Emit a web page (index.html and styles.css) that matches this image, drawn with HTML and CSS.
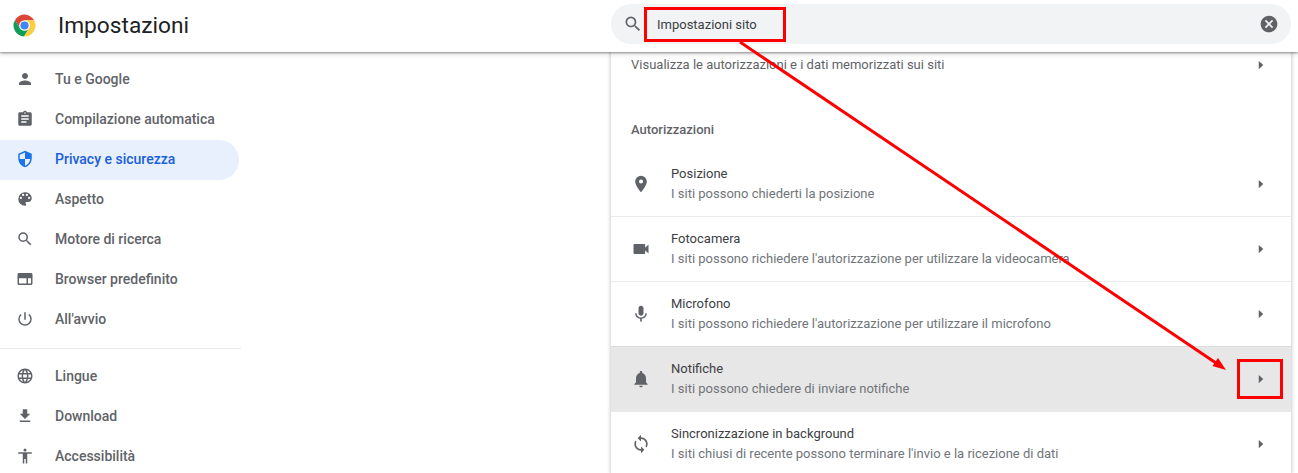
FILE: index.html
```html
<!DOCTYPE html>
<html lang="it">
<head>
  <meta charset="UTF-8" />
  <title>Impostazioni</title>
  <link rel="stylesheet" href="styles.css">
</head>
<body>
  <header class="topbar">
    <div class="brand">
      <svg class="logo" viewBox="0 0 24 24">
        <path d="M12 6.5H22A11.5 11.5 0 0 0 2.1 6.2L7.2 14.8z" fill="#db4437"/>
        <path d="M7.2 14.8 2.1 6.2A11.5 11.5 0 0 0 11.5 23.5L16.8 14.8z" fill="#0f9d58"/>
        <path d="M12 6.5H22A11.5 11.5 0 0 1 11.5 23.5L16.8 14.8z" fill="#ffcd40"/>
        <circle cx="12" cy="12" r="5.6" fill="#fff"/>
        <circle cx="12" cy="12" r="4.3" fill="#4285f4"/>
      </svg>
      <h1 class="title">Impostazioni</h1>
    </div>
    <div class="search">
      <svg class="search-icon" viewBox="0 0 24 24"><path d="M15.5 14h-.79l-.28-.27A6.47 6.47 0 0 0 16 9.5 6.5 6.5 0 1 0 9.5 16c1.61 0 3.09-.59 4.23-1.57l.27.28v.79l5 4.99L20.49 19l-4.99-5zm-6 0C7.01 14 5 11.99 5 9.5S7.01 5 9.5 5 14 7.01 14 9.5 11.99 14 9.5 14z"/></svg>
      <span class="search-text">Impostazioni sito</span>
      <svg class="clear-icon" viewBox="0 0 24 24"><path d="M12 2C6.47 2 2 6.47 2 12s4.47 10 10 10 10-4.47 10-10S17.53 2 12 2zm5 13.59L15.59 17 12 13.41 8.41 17 7 15.59 10.59 12 7 8.41 8.41 7 12 10.59 15.59 7 17 8.41 13.41 12 17 15.59z"/></svg>
    </div>
  </header>

  <div class="main">
    <nav class="sidebar">
      <a class="nav-item"><svg viewBox="0 0 24 24"><path d="M12 12c2.21 0 4-1.79 4-4s-1.79-4-4-4-4 1.79-4 4 1.79 4 4 4zm0 2c-2.67 0-8 1.34-8 4v2h16v-2c0-2.66-5.33-4-8-4z"/></svg>Tu e Google</a>
      <a class="nav-item"><svg viewBox="0 0 24 24"><path d="M19 3h-4.18C14.4 1.84 13.3 1 12 1s-2.4.84-2.82 2H5c-1.1 0-2 .9-2 2v14c0 1.1.9 2 2 2h14c1.1 0 2-.9 2-2V5c0-1.1-.9-2-2-2zm-7 0c.55 0 1 .45 1 1s-.45 1-1 1-1-.45-1-1 .45-1 1-1zm2 14H7v-2h7v2zm3-4H7v-2h10v2zm0-4H7V7h10v2z"/></svg>Compilazione automatica</a>
      <a class="nav-item active"><svg viewBox="0 0 24 24"><path d="M12 1 3 5v6c0 5.55 3.84 10.74 9 12 5.16-1.26 9-6.45 9-12V5l-9-4zm0 10.99h7c-.53 4.12-3.28 7.79-7 8.94V12H5V6.3l7-3.11v8.8z"/></svg>Privacy e sicurezza</a>
      <a class="nav-item"><svg viewBox="0 0 24 24"><path d="M12 3a9 9 0 0 0 0 18c.83 0 1.5-.67 1.5-1.5 0-.39-.15-.74-.39-1.01-.23-.26-.38-.61-.38-.99 0-.83.67-1.5 1.5-1.5H16c2.76 0 5-2.24 5-5 0-4.42-4.03-8-9-8zm-5.5 9a1.5 1.5 0 1 1 0-3 1.5 1.5 0 0 1 0 3zm3-4a1.5 1.5 0 1 1 0-3 1.5 1.5 0 0 1 0 3zm5 0a1.5 1.5 0 1 1 0-3 1.5 1.5 0 0 1 0 3zm3 4a1.5 1.5 0 1 1 0-3 1.5 1.5 0 0 1 0 3z"/></svg>Aspetto</a>
      <a class="nav-item"><svg viewBox="0 0 24 24"><path d="M15.5 14h-.79l-.28-.27A6.47 6.47 0 0 0 16 9.5 6.5 6.5 0 1 0 9.5 16c1.61 0 3.09-.59 4.23-1.57l.27.28v.79l5 4.99L20.49 19l-4.99-5zm-6 0C7.01 14 5 11.99 5 9.5S7.01 5 9.5 5 14 7.01 14 9.5 11.99 14 9.5 14z"/></svg>Motore di ricerca</a>
      <a class="nav-item"><svg viewBox="0 0 24 24"><path d="M20 4H4c-1.1 0-2 .9-2 2v12c0 1.1.9 2 2 2h16c1.1 0 2-.9 2-2V6c0-1.1-.9-2-2-2zM4 18v-7h10v7H4zm16 0h-4v-7h4v7z"/></svg>Browser predefinito</a>
      <a class="nav-item"><svg viewBox="0 0 24 24"><path d="M13 3h-2v10h2V3zm4.83 2.17-1.42 1.42A6.92 6.92 0 0 1 19 12a7 7 0 1 1-11.42-5.41L6.17 5.17A8.93 8.93 0 0 0 3 12a9 9 0 0 0 18 0c0-2.74-1.23-5.18-3.17-6.83z"/></svg>All'avvio</a>
      <div class="nav-sep"></div>
      <a class="nav-item"><svg viewBox="0 0 24 24"><path d="M11.99 2C6.47 2 2 6.48 2 12s4.47 10 9.99 10C17.52 22 22 17.52 22 12S17.52 2 11.99 2zm6.93 6h-2.95a15.65 15.65 0 0 0-1.38-3.56A8.03 8.03 0 0 1 18.92 8zM12 4.04c.83 1.2 1.48 2.53 1.91 3.96h-3.82c.43-1.43 1.08-2.76 1.91-3.96zM4.26 14C4.1 13.36 4 12.69 4 12s.1-1.36.26-2h3.38c-.08.66-.14 1.32-.14 2s.06 1.34.14 2H4.26zm.82 2h2.95c.32 1.25.78 2.45 1.38 3.56A7.987 7.987 0 0 1 5.08 16zm2.95-8H5.08a7.987 7.987 0 0 1 4.33-3.56A15.65 15.65 0 0 0 8.03 8zM12 19.96c-.83-1.2-1.48-2.53-1.91-3.96h3.82c-.43 1.43-1.08 2.76-1.91 3.96zM14.34 14H9.66c-.09-.66-.16-1.32-.16-2s.07-1.35.16-2h4.68c.09.65.16 1.32.16 2s-.07 1.34-.16 2zm.25 5.56c.6-1.11 1.06-2.31 1.38-3.56h2.95a8.03 8.03 0 0 1-4.33 3.56zM16.36 14c.08-.66.14-1.32.14-2s-.06-1.34-.14-2h3.38c.16.64.26 1.31.26 2s-.1 1.36-.26 2h-3.38z"/></svg>Lingue</a>
      <a class="nav-item"><svg viewBox="0 0 24 24"><path d="M19 9h-4V3H9v6H5l7 7 7-7zM5 18v2h14v-2H5z"/></svg>Download</a>
      <a class="nav-item"><svg viewBox="0 0 24 24"><path d="M12 2a2 2 0 1 1 0 4 2 2 0 0 1 0-4zm9 7h-6v13h-2v-6h-2v6H9V9H3V7h18v2z"/></svg>Accessibilità</a>
    </nav>

    <section class="card">
      <div class="top-row">
        <span>Visualizza le autorizzazioni e i dati memorizzati sui siti</span>
        <svg class="chevron" viewBox="0 0 24 24"><path d="M9 6.5 15 12l-6 5.5z"/></svg>
      </div>
      <h2 class="card-heading">Autorizzazioni</h2>

      <div class="perm">
        <svg class="perm-icon" viewBox="0 0 24 24"><path d="M12 2a7 7 0 0 0-7 7c0 5.25 7 13 7 13s7-7.75 7-13a7 7 0 0 0-7-7zm0 9.5a2.5 2.5 0 1 1 0-5 2.5 2.5 0 0 1 0 5z"/></svg>
        <div class="perm-text"><div class="perm-name">Posizione</div><div class="perm-desc">I siti possono chiederti la posizione</div></div>
        <svg class="chevron" viewBox="0 0 24 24"><path d="M9 6.5 15 12l-6 5.5z"/></svg>
      </div>
      <div class="perm">
        <svg class="perm-icon" viewBox="0 0 24 24"><path d="M17 10.5V7c0-.55-.45-1-1-1H4c-.55 0-1 .45-1 1v10c0 .55.45 1 1 1h12c.55 0 1-.45 1-1v-3.5l4 4v-11l-4 4z"/></svg>
        <div class="perm-text"><div class="perm-name">Fotocamera</div><div class="perm-desc">I siti possono richiedere l'autorizzazione per utilizzare la videocamera</div></div>
        <svg class="chevron" viewBox="0 0 24 24"><path d="M9 6.5 15 12l-6 5.5z"/></svg>
      </div>
      <div class="perm">
        <svg class="perm-icon" viewBox="0 0 24 24"><path d="M12 14c1.66 0 2.99-1.34 2.99-3L15 5c0-1.66-1.34-3-3-3S9 3.34 9 5v6c0 1.66 1.34 3 3 3zm5.3-3c0 3-2.54 5.1-5.3 5.1S6.7 14 6.7 11H5c0 3.41 2.72 6.23 6 6.72V21h2v-3.28c3.28-.48 6-3.3 6-6.72h-1.7z"/></svg>
        <div class="perm-text"><div class="perm-name">Microfono</div><div class="perm-desc">I siti possono richiedere l'autorizzazione per utilizzare il microfono</div></div>
        <svg class="chevron" viewBox="0 0 24 24"><path d="M9 6.5 15 12l-6 5.5z"/></svg>
      </div>
      <div class="perm hovered">
        <svg class="perm-icon" viewBox="0 0 24 24"><path d="M12 22c1.1 0 2-.9 2-2h-4c0 1.1.89 2 2 2zm6-6v-5c0-3.07-1.64-5.64-4.5-6.32V4c0-.83-.67-1.5-1.5-1.5s-1.5.67-1.5 1.5v.68C7.63 5.36 6 7.92 6 11v5l-2 2v1h16v-1l-2-2z"/></svg>
        <div class="perm-text"><div class="perm-name">Notifiche</div><div class="perm-desc">I siti possono chiedere di inviare notifiche</div></div>
        <svg class="chevron" viewBox="0 0 24 24"><path d="M9 6.5 15 12l-6 5.5z"/></svg>
      </div>
      <div class="perm">
        <svg class="perm-icon" viewBox="0 0 24 24"><path d="M12 4V1L8 5l4 4V6c3.31 0 6 2.69 6 6 0 1.01-.25 1.97-.7 2.8l1.46 1.46A7.93 7.93 0 0 0 20 12c0-4.42-3.58-8-8-8zm0 14c-3.31 0-6-2.69-6-6 0-1.01.25-1.97.7-2.8L5.24 7.74A7.93 7.93 0 0 0 4 12c0 4.42 3.58 8 8 8v3l4-4-4-4v3z"/></svg>
        <div class="perm-text"><div class="perm-name">Sincronizzazione in background</div><div class="perm-desc">I siti chiusi di recente possono terminare l'invio e la ricezione di dati</div></div>
        <svg class="chevron" viewBox="0 0 24 24"><path d="M9 6.5 15 12l-6 5.5z"/></svg>
      </div>
    </section>
  </div>

  <!-- red marks drawn over the screenshot -->
  <div class="mark mark-search"></div>
  <div class="mark mark-arrow-end"></div>
  <svg class="arrow" viewBox="0 0 1298 473">
    <line x1="740" y1="42" x2="1216" y2="363" stroke="#ff0000" stroke-width="3"/>
    <path d="M1226 370 1212.5 366 1218 358z" fill="#ff0000"/>
  </svg>
</body>
</html>
```

FILE: styles.css
```css
* {
  box-sizing: border-box;
}
html, body {
  height: 100%;
}
body {
  margin: 0;
  height: 473px;
  overflow: hidden;
  background: #fff;
  font-family: Roboto, sans-serif;
  font-size: 13px;
  color: #202124;
  display: flex;
  flex-direction: column;
}
.topbar {
  height: 52px;
  flex: none;
  display: flex;
  align-items: center;
  background: #fff;
  box-shadow: 0 1px 2px rgba(60, 64, 67, 0.5), 0 2px 5px rgba(60, 64, 67, 0.2);
  position: relative;
  z-index: 2;
}
.brand {
  width: 611px;
  display: flex;
  align-items: center;
  padding-left: 13px;
  margin-bottom: 2px;
}
.logo {
  width: 23px;
  height: 23px;
}
.title {
  margin: 0 0 0 22px;
  font-size: 22.7px;
  font-weight: 400;
  color: #202124;
}
.search {
  width: 680px;
  height: 40px;
  margin-bottom: 4px;
  border-radius: 20px;
  background: #f1f3f4;
  display: flex;
  align-items: center;
  padding: 0 12px;
}
.search-icon {
  width: 20px;
  height: 20px;
  fill: #5f6368;
  flex: none;
}
.search-text {
  margin-left: 14px;
  flex: 1;
  color: #3c4043;
}
.clear-icon {
  width: 20px;
  height: 20px;
  fill: #5f6368;
  flex: none;
}
.main {
  flex: 1;
  display: flex;
  min-height: 0;
}
.sidebar {
  width: 611px;
  flex: none;
  padding-top: 8px;
}
.nav-item {
  width: 239px;
  height: 40px;
  display: flex;
  align-items: center;
  padding: 0 0 2px 16px;
  border-radius: 0 20px 20px 0;
  color: #5f6368;
  font-size: 14px;
  font-weight: 500;
}
.nav-item svg {
  width: 18px;
  height: 18px;
  margin-right: 21px;
  fill: #5f6368;
  flex: none;
}
.nav-item.active {
  background: #e8f0fe;
  color: #1a5ed8;
}
.nav-item.active svg {
  fill: #1a73e8;
}
.nav-sep {
  width: 241px;
  height: 1px;
  margin: 8px 0;
  background: #e8eaed;
}
.card {
  width: 680px;
  background: #fff;
  box-shadow: 0 0 3px 1px rgba(60, 64, 67, 0.25);
}
.top-row {
  height: 25px;
  display: flex;
  align-items: center;
  justify-content: space-between;
  padding: 0 20px;
  color: #5f6368;
}
.chevron {
  width: 18px;
  height: 18px;
  fill: #5f6368;
  flex: none;
}
.top-row .chevron {
  margin-right: 1px;
}
.card-heading {
  margin: 45px 0 14px 20px;
  font-size: 13px;
  line-height: 16px;
  font-weight: 500;
  color: #5f6368;
}
.perm {
  height: 65px;
  display: flex;
  align-items: center;
  padding: 0 21px 0 20px;
  border-bottom: 1px solid #e8eaed;
}
.perm-icon {
  width: 20px;
  height: 20px;
  fill: #5f6368;
  flex: none;
}
.perm-text {
  flex: 1;
  margin-left: 20px;
}
.perm-name {
  line-height: 20px;
  color: #3c4043;
}
.perm-desc {
  line-height: 20px;
  color: #70757a;
}
.hovered {
  background: #e7e7e7;
  border-top: 1px solid #dadce0;
  margin-top: -1px;
  height: 66px;
}
.mark {
  position: absolute;
  border: 3px solid #ff0000;
  z-index: 3;
}
.mark-search {
  left: 644px;
  top: 7px;
  width: 142px;
  height: 35px;
}
.mark-arrow-end {
  left: 1237px;
  top: 359px;
  width: 46px;
  height: 40px;
}
.arrow {
  position: absolute;
  left: 0;
  top: 0;
  width: 1298px;
  height: 473px;
  z-index: 3;
}
```
